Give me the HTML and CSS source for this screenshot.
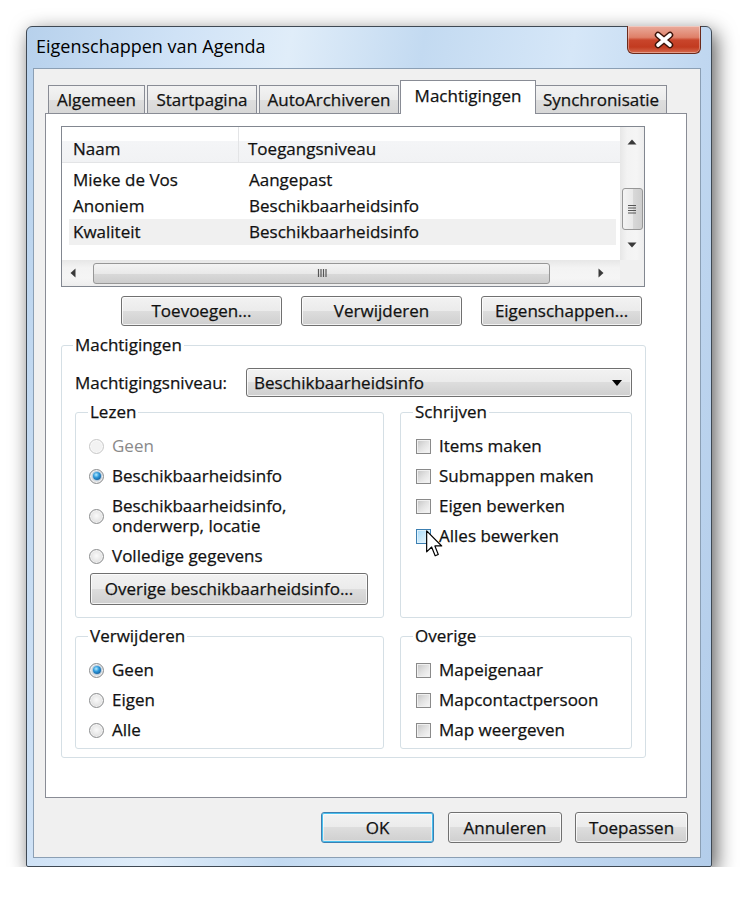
FILE: index.html
```html
<!DOCTYPE html>
<html lang="nl">
<head>
<meta charset="utf-8">
<title>Eigenschappen van Agenda</title>
<link rel="stylesheet" href="styles.css">
</head>
<body>
<div class="window">
  <div class="titlebar">
    <span class="title">Eigenschappen van Agenda</span>
    <span class="close">
      <svg width="24" height="18" viewBox="0 0 24 18">
        <path d="M6 4 L18 14 M18 4 L6 14" stroke="#3b1309" stroke-width="6.5" stroke-linecap="round" fill="none"/>
        <path d="M6 4 L18 14 M18 4 L6 14" stroke="#ffffff" stroke-width="3.6" stroke-linecap="round" fill="none"/>
      </svg>
    </span>
  </div>

  <div class="client">
    <ul class="tabs">
      <li class="tab tab-general">Algemeen</li>
      <li class="tab tab-home">Startpagina</li>
      <li class="tab tab-archive">AutoArchiveren</li>
      <li class="tab tab-rights active">Machtigingen</li>
      <li class="tab tab-sync">Synchronisatie</li>
    </ul>

    <div class="panel">
      <!-- lijst met gebruikers -->
      <div class="listbox">
        <div class="list-main">
          <div class="list-header">
            <span class="col col-name">Naam</span>
            <span class="col col-level">Toegangsniveau</span>
          </div>
          <div class="list-rows">
            <div class="list-row"><span class="col col-name">Mieke de Vos</span><span class="col col-level">Aangepast</span></div>
            <div class="list-row"><span class="col col-name">Anoniem</span><span class="col col-level">Beschikbaarheidsinfo</span></div>
            <div class="list-row selected"><span class="col col-name">Kwaliteit</span><span class="col col-level">Beschikbaarheidsinfo</span></div>
          </div>
        </div>
        <div class="vscroll">
          <span class="sb-btn sb-up"><svg width="10" height="6" viewBox="0 0 10 6"><polygon points="5,0.5 9.5,5.5 0.5,5.5" fill="#3a3a3a"/></svg></span>
          <span class="vthumb">
            <svg width="10" height="10" viewBox="0 0 10 10"><path d="M1 1.5 H9 M1 4 H9 M1 6.5 H9 M1 9 H9" stroke="#555" stroke-width="1.2"/></svg>
          </span>
          <span class="sb-btn sb-down"><svg width="10" height="6" viewBox="0 0 10 6"><polygon points="0.5,0.5 9.5,0.5 5,5.5" fill="#3a3a3a"/></svg></span>
        </div>
        <div class="hscroll">
          <span class="sb-btn sb-left"><svg width="6" height="10" viewBox="0 0 6 10"><polygon points="0.5,5 5.5,0.5 5.5,9.5" fill="#3a3a3a"/></svg></span>
          <span class="hthumb">
            <svg width="10" height="10" viewBox="0 0 10 10"><path d="M1.5 1 V9 M4 1 V9 M6.5 1 V9 M9 1 V9" stroke="#555" stroke-width="1.2"/></svg>
          </span>
          <span class="sb-btn sb-right"><svg width="6" height="10" viewBox="0 0 6 10"><polygon points="0.5,0.5 5.5,5 0.5,9.5" fill="#3a3a3a"/></svg></span>
        </div>
        <div class="corner"></div>
      </div>

      <div class="list-buttons">
        <button class="btn list-btn">Toevoegen...</button>
        <button class="btn list-btn">Verwijderen</button>
        <button class="btn list-btn">Eigenschappen...</button>
      </div>

      <fieldset class="rights">
        <legend>Machtigingen</legend>
        <div class="level-row">
          <span class="level-label">Machtigingsniveau:</span>
          <div class="combo">
            <span>Beschikbaarheidsinfo</span>
            <svg width="10" height="6" viewBox="0 0 10 6"><polygon points="0,0 10,0 5,6" fill="#000"/></svg>
          </div>
        </div>

        <div class="groups">
          <fieldset class="group group-top">
            <legend>Lezen</legend>
            <div class="opt disabled"><span class="radio"></span>Geen</div>
            <div class="opt"><span class="radio checked"></span>Beschikbaarheidsinfo</div>
            <div class="opt opt-double"><span class="radio"></span><span class="two-lines"><span>Beschikbaarheidsinfo,</span><span>onderwerp, locatie</span></span></div>
            <div class="opt"><span class="radio"></span>Volledige gegevens</div>
            <button class="btn more-btn">Overige beschikbaarheidsinfo...</button>
          </fieldset>

          <fieldset class="group group-top">
            <legend>Schrijven</legend>
            <div class="opt"><span class="checkbox"></span>Items maken</div>
            <div class="opt"><span class="checkbox"></span>Submappen maken</div>
            <div class="opt"><span class="checkbox"></span>Eigen bewerken</div>
            <div class="opt">
              <span class="checkbox hover">
                <svg class="cursor" width="17" height="28" viewBox="0 0 13 21">
                  <path d="M0.5 0.5 L0.5 16.5 L4.3 12.8 L7 19.5 L9.4 18.5 L6.8 12 L12 12 Z" fill="#fff" stroke="#000" stroke-width="0.9" stroke-linejoin="round"/>
                </svg>
              </span>Alles bewerken
            </div>
          </fieldset>

          <fieldset class="group group-bottom">
            <legend>Verwijderen</legend>
            <div class="opt"><span class="radio checked"></span>Geen</div>
            <div class="opt"><span class="radio"></span>Eigen</div>
            <div class="opt"><span class="radio"></span>Alle</div>
          </fieldset>

          <fieldset class="group group-bottom">
            <legend>Overige</legend>
            <div class="opt"><span class="checkbox"></span>Mapeigenaar</div>
            <div class="opt"><span class="checkbox"></span>Mapcontactpersoon</div>
            <div class="opt"><span class="checkbox"></span>Map weergeven</div>
          </fieldset>
        </div>
      </fieldset>
    </div>

    <div class="dialog-buttons">
      <button class="btn dlg-btn default">OK</button>
      <button class="btn dlg-btn btn-cancel">Annuleren</button>
      <button class="btn dlg-btn">Toepassen</button>
    </div>
  </div>
</div>
</body>
</html>
```

FILE: styles.css
```css
body {
    margin: 0;
    background: #fff;
    font-family: "Open Sans", "Noto Sans", sans-serif;
    font-size: 17px;
    line-height: 20px;
    color: #111;
    -webkit-text-stroke: 0.25px #111;
}

/* venster met aero-rand */
.window {
    box-sizing: border-box;
    width: 686px;
    height: 841px;
    margin: 26px 0 0 26px;
    padding: 0 10px 8px 6px;
    border: 1px solid #3f4954;
    border-radius: 6px 6px 2px 2px;
    background: linear-gradient(100deg, #b7d1ec 0%, #cfe2f6 18%, #e0edf9 32%, #c3daf1 48%, #d6e7f8 66%, #c0d7f0 82%, #b3cdea 100%);
    box-shadow: 4px 6px 20px rgba(0, 0, 0, 0.65);
    display: flex;
    flex-direction: column;
}
.titlebar {
    display: flex;
    align-items: flex-start;
    height: 41px;
}
.title {
    margin: 8px 0 0 3px;
    font-size: 18px;
    line-height: 22px;
    color: #000;
    -webkit-text-stroke: 0;
}
.close {
    margin-left: auto;
    margin-top: -1px;
    width: 74px;
    height: 28px;
    box-sizing: border-box;
    border: 1px solid #6b2a1b;
    border-top: none;
    border-radius: 0 0 6px 6px;
    background: linear-gradient(#eaab9c 0%, #df8069 42%, #c9452b 52%, #c23b20 78%, #d66a4e 100%);
    box-shadow: inset 0 0 0 1px rgba(255, 255, 255, 0.35);
    display: flex;
    align-items: center;
    justify-content: center;
}

.client {
    flex: 1;
    display: flex;
    flex-direction: column;
    border: 1px solid #8b9fb4;
    background: #f0f0f0;
    padding: 11px 13px 14px 11px;
}

/* tabbladen */
.tabs {
    display: flex;
    align-items: flex-end;
    height: 33px;
    margin: 0;
    padding: 0 0 0 3px;
    list-style-type: none;
}
.tab {
    box-sizing: border-box;
    height: 28px;
    padding: 0;
    margin-right: 2px;
    line-height: 27px;
    text-align: center;
    border: 1px solid #898c95;
    border-bottom: none;
    background: linear-gradient(#f3f3f3 0%, #ebebeb 50%, #dedede 51%, #d7d7d7 100%);
}
.tab-general { width: 97px; }
.tab-home { width: 110px; }
.tab-archive { width: 140px; }
.tab-rights { width: 136px; }
.tab-sync { width: 132px; }
.tab.active {
    position: relative;
    z-index: 1;
    height: 34px;
    margin: 0 -1px -1px -1px;
    line-height: 30px;
    background: #fff;
}

.panel {
    flex: 1;
    display: flex;
    flex-direction: column;
    border: 1px solid #898c95;
    background: #fff;
}

/* lijst */
.listbox {
    display: grid;
    grid-template-columns: 1fr 24px;
    grid-template-rows: 1fr 26px;
    height: 161px;
    margin: 12px 41px 0 15px;
    border: 1px solid #828790;
    box-sizing: border-box;
}
.list-main {
    overflow: hidden;
}
.list-header {
    display: flex;
    height: 36px;
    box-sizing: border-box;
    padding-left: 7px;
    border-bottom: 1px solid #e3e4e6;
    background: linear-gradient(#fff 0%, #fff 40%, #f4f5f7 41%, #f1f2f4 100%);
}
.list-header .col {
    padding-top: 12px;
}
.list-header .col-name {
    width: 170px;
    border-right: 1px solid #e3e4e6;
}
.col {
    display: block;
}
.col-name {
    width: 171px;
    padding-left: 4px;
    box-sizing: border-box;
}
.col-level {
    padding-left: 9px;
}
.list-rows {
    padding-top: 4px;
}
.list-row {
    display: flex;
    height: 26px;
    line-height: 26px;
    margin: 0 4px 0 7px;
}
.list-row.selected {
    background: #f0f0f0;
}

.vscroll {
    display: flex;
    flex-direction: column;
    align-items: center;
    background: linear-gradient(to right, #e7e7e7, #f3f3f3 30%, #f5f5f5 70%, #ededed);
}
.hscroll {
    display: flex;
    align-items: center;
    background: linear-gradient(#e7e7e7, #f3f3f3 30%, #f5f5f5 70%, #ededed);
}
.corner {
    background: #f0f0f0;
}
.sb-btn {
    display: flex;
    align-items: center;
    justify-content: center;
}
.sb-up, .sb-down {
    width: 24px;
    height: 30px;
}
.sb-down {
    margin-top: auto;
}
.sb-left {
    width: 22px;
    height: 26px;
}
.sb-right {
    width: 24px;
    height: 26px;
    margin-left: auto;
    margin-right: 7px;
}
.vthumb {
    box-sizing: border-box;
    width: 21px;
    height: 42px;
    margin-top: 31px;
    border: 1px solid #979797;
    border-radius: 3px;
    background: linear-gradient(to right, #f4f4f4 0%, #e9e9e9 50%, #d9d9d9 51%, #cdcdcd 100%);
    display: flex;
    align-items: center;
    justify-content: center;
}
.hthumb {
    box-sizing: border-box;
    width: 457px;
    height: 21px;
    margin-left: 9px;
    border: 1px solid #979797;
    border-radius: 3px;
    background: linear-gradient(#f4f4f4 0%, #e9e9e9 50%, #d9d9d9 51%, #cdcdcd 100%);
    display: flex;
    align-items: center;
    justify-content: center;
}

/* knoppen */
.btn {
    box-sizing: border-box;
    display: flex;
    align-items: center;
    justify-content: center;
    padding: 0;
    font: inherit;
    color: #111;
    border: 1px solid #707070;
    border-radius: 3px;
    background: linear-gradient(#f2f2f2 0%, #ebebeb 49%, #dddddd 50%, #cfcfcf 100%);
    box-shadow: inset 0 0 0 1px rgba(255, 255, 255, 0.75);
}
.list-buttons {
    display: flex;
    justify-content: flex-end;
    gap: 19px;
    margin: 9px 44px 0 0;
}
.list-btn {
    width: 161px;
    height: 30px;
}

/* groepen */
fieldset {
    margin: 0;
    min-width: 0;
    border: 1px solid #d5dfe5;
    border-radius: 3px;
}
legend {
    margin-left: -2px;
    padding: 0 2px;
    line-height: 20px;
}
.rights {
    margin: 9px 40px 0 15px;
    padding: 13px 13px 8px 13px;
}
.level-row {
    display: flex;
    align-items: center;
}
.level-label {
    width: 171px;
}
.combo {
    flex: 1;
    height: 29px;
    box-sizing: border-box;
    padding: 0 9px 0 7px;
    display: flex;
    align-items: center;
    justify-content: space-between;
    border: 1px solid #707070;
    border-radius: 3px;
    background: linear-gradient(#f2f2f2 0%, #ebebeb 49%, #dddddd 50%, #cfcfcf 100%);
    box-shadow: inset 0 0 0 1px rgba(255, 255, 255, 0.75);
}
.groups {
    display: grid;
    grid-template-columns: 309px 1fr;
    column-gap: 16px;
    row-gap: 8px;
    margin-top: 5px;
}
.group {
    display: flex;
    flex-direction: column;
    padding: 9px 14px 12px 14px;
}
.group-bottom {
    padding-bottom: 3px;
}
.opt {
    display: flex;
    align-items: center;
    gap: 8px;
    min-height: 30px;
}
.opt-double {
    min-height: 50px;
}
.two-lines {
    display: flex;
    flex-direction: column;
}
.opt.disabled {
    color: #8a8a8a;
    -webkit-text-stroke: 0;
}
.more-btn {
    align-self: flex-start;
    width: 278px;
    height: 32px;
    margin-top: 2px;
}

.radio {
    flex: none;
    box-sizing: border-box;
    width: 15px;
    height: 15px;
    margin-left: -1px;
    border-radius: 50%;
    border: 1px solid #8c8e8f;
    background: radial-gradient(circle at 50% 45%, #fafafa 0%, #e6e6e6 55%, #c6c6c6 100%);
    box-shadow: inset 0 0 0 1px rgba(255, 255, 255, 0.6);
    display: flex;
    align-items: center;
    justify-content: center;
}
.radio.checked::after {
    content: "";
    width: 8px;
    height: 8px;
    border-radius: 50%;
    background: radial-gradient(circle at 40% 35%, #b6ecff 0%, #2b97da 40%, #0a3f78 100%);
    box-shadow: 0 0 1px 1px rgba(60, 130, 190, 0.35);
}
.disabled .radio {
    border-color: #c8c8c8;
    background: #f2f2f2;
}
.checkbox {
    flex: none;
    position: relative;
    box-sizing: border-box;
    width: 15px;
    height: 15px;
    margin-left: 1px;
    border: 1px solid #8a8a8a;
    background: linear-gradient(135deg, #c4c4c4 0%, #e3e3e3 50%, #f8f8f8 100%);
    box-shadow: inset 0 0 0 1px #f0f0f0;
}
.checkbox.hover {
    border-color: #3c7fb1;
    background: linear-gradient(135deg, #a9dbf9 0%, #cdebfc 50%, #ecf8fe 100%);
    box-shadow: inset 0 0 0 1px #def2fd;
}
.cursor {
    position: absolute;
    left: 9px;
    top: 0;
}

/* onderste knoppen */
.dialog-buttons {
    display: flex;
    justify-content: flex-end;
    gap: 13px;
    margin: 14px -1px 0 0;
}
.dlg-btn {
    width: 113px;
    height: 31px;
}
.btn-cancel {
    width: 114px;
}
.default {
    margin-right: 1px;
    border-color: #3c7fb1;
    box-shadow: inset 0 0 0 1px #49c0ef, inset 0 0 0 2px rgba(255, 255, 255, 0.5);
}
```
